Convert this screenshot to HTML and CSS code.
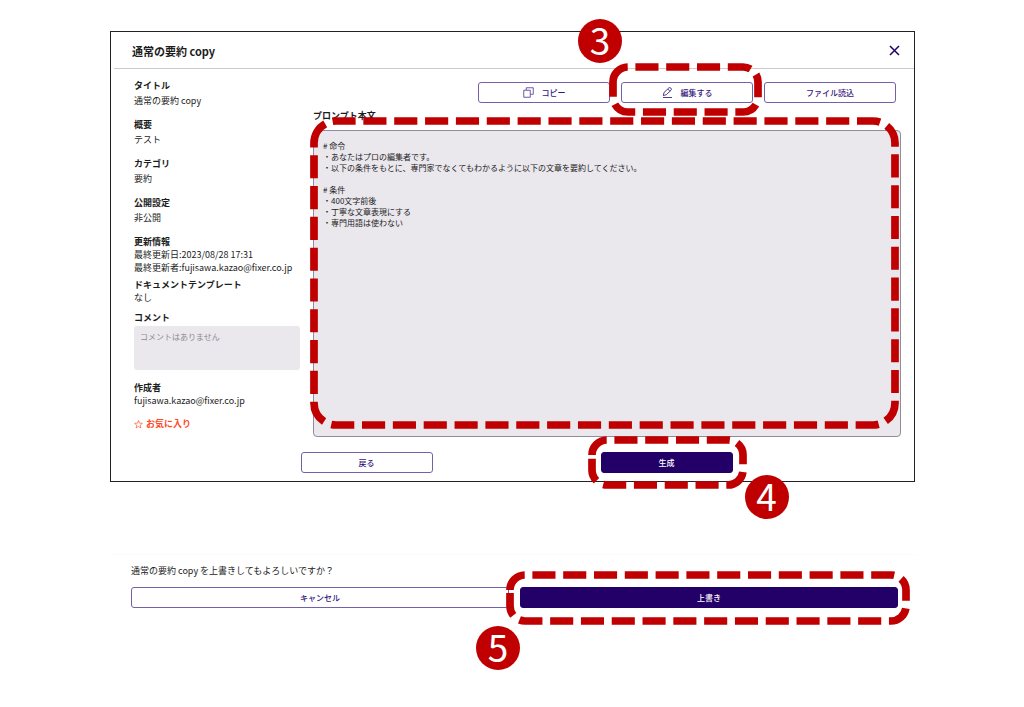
FILE: index.html
```html
<!DOCTYPE html>
<html lang="ja">
<head>
<meta charset="utf-8">
<meta name="viewport" content="width=device-width, initial-scale=1">
<title>通常の要約 copy</title>
<link rel="stylesheet" href="styles.css">
</head>
<body>
<main class="page">
  <section class="panel" aria-labelledby="panel-title">
    <header class="panel-head">
      <h1 class="panel-title" id="panel-title">通常の要約 copy</h1>
      <button class="close" type="button" aria-label="閉じる">
        <svg width="11" height="11" viewBox="0 0 11 11" fill="none" stroke="currentColor" stroke-width="1.5"><path d="M1 1l9 9M10 1L1 10"/></svg>
      </button>
    </header>

    <div class="panel-body">
      <aside class="info">
        <div class="field"><h2>タイトル</h2><p>通常の要約 copy</p></div>
        <div class="field"><h2>概要</h2><p>テスト</p></div>
        <div class="field"><h2>カテゴリ</h2><p>要約</p></div>
        <div class="field"><h2>公開設定</h2><p>非公開</p></div>
        <div class="field tight short"><h2>更新情報</h2><p>最終更新日:2023/08/28 17:31</p><p>最終更新者:fujisawa.kazao@fixer.co.jp</p></div>
        <div class="field tight mid"><h2>ドキュメントテンプレート</h2><p>なし</p></div>
        <div class="field">
          <label for="comment">コメント</label>
          <textarea class="comment" id="comment" placeholder="コメントはありません" readonly></textarea>
        </div>
        <div class="field tight"><h2>作成者</h2><p>fujisawa.kazao@fixer.co.jp</p></div>
        <button class="favorite" type="button">
          <svg width="9" height="9" viewBox="0 0 18 18" fill="none" stroke="currentColor" stroke-width="1.3" stroke-linejoin="round"><path d="M9 1l2.100 5.300 5.700.4-4.400 3.700 1.400 5.600L9 12.900l-4.800 3.100 1.400-5.600L1.200 6.700l5.700-.4z"/></svg>
          お気に入り
        </button>
      </aside>

      <div class="editor">
        <div class="tools">
          <button class="btn" type="button">
            <svg width="11" height="11" viewBox="0 0 22 22" fill="none" stroke="currentColor" stroke-width="1.4"><path d="M1.500 6.500h13v14h-13zM6.500 6V1.500h14v13H15"/></svg>
            コピー
          </button>
          <div class="marked">
            <button class="btn" type="button">
              <svg width="11" height="11" viewBox="0 0 22 22" fill="none" stroke="currentColor" stroke-width="1.7" stroke-linejoin="round"><path d="M2 21h18M2.500 17l1.500-6L13.500 2a3.200 3.200 0 0 1 4.500 4.500L8.500 15.500zM11.500 4l4.500 4.500"/></svg>
              編集する
            </button>
            <svg class="ring ring-edit" viewBox="0 0 145 45" preserveAspectRatio="none" aria-hidden="true"><path d="M0 15A15 15 0 0 1 15 0H130A15 15 0 0 1 145 15V30A15 15 0 0 1 130 45H15A15 15 0 0 1 0 30Z"/></svg>
            <span class="step step-edit">3</span>
          </div>
          <button class="btn" type="button">ファイル読込</button>
        </div>
        <label class="prompt-label" for="prompt">プロンプト本文</label>
        <div class="marked prompt-box">
          <textarea class="prompt" id="prompt" readonly># 命令
・あなたはプロの編集者です。
・以下の条件をもとに、専門家でなくてもわかるように以下の文章を要約してください。

# 条件
・400文字前後
・丁寧な文章表現にする
・専門用語は使わない</textarea>
          <svg class="ring ring-prompt" viewBox="0 0 580 304" preserveAspectRatio="none" aria-hidden="true"><path d="M0 22A22 22 0 0 1 22 0H558A22 22 0 0 1 580 22V282A22 22 0 0 1 558 304H22A22 22 0 0 1 0 282Z"/></svg>
        </div>
      </div>
    </div>

    <footer class="panel-foot">
      <button class="btn" type="button">戻る</button>
      <div class="marked">
        <button class="btn primary" type="button">生成</button>
        <svg class="ring ring-run" viewBox="0 0 151 45" preserveAspectRatio="none" aria-hidden="true"><path d="M0 15A15 15 0 0 1 15 0H136A15 15 0 0 1 151 15V30A15 15 0 0 1 136 45H15A15 15 0 0 1 0 30Z"/></svg>
        <span class="step step-run">4</span>
      </div>
    </footer>
  </section>

  <section class="confirm">
    <p class="question">通常の要約 copy を上書きしてもよろしいですか？</p>
    <div class="choices">
      <button class="btn" type="button">キャンセル</button>
      <div class="marked">
        <button class="btn primary" type="button">上書き</button>
        <svg class="ring ring-save" viewBox="0 0 396 46" preserveAspectRatio="none" aria-hidden="true"><path d="M0 15A15 15 0 0 1 15 0H381A15 15 0 0 1 396 15V31A15 15 0 0 1 381 46H15A15 15 0 0 1 0 31Z"/></svg>
        <span class="step step-save">5</span>
      </div>
    </div>
  </section>
</main>
</body>
</html>
```

FILE: styles.css
```css
* {
  box-sizing: border-box;
  margin: 0;
}

body {
  background: #fff;
  color: #1c1c1c;
  font: 9px/13px "Noto Sans CJK JP", sans-serif;
}

button,
textarea {
  font-family: inherit;
}

.page {
  min-height: 100vh;
  padding: 31px 109px 48px 110px;
}

/* Detail panel */
.panel {
  border: 1px solid #222;
}

.panel-head {
  display: flex;
  align-items: center;
  justify-content: space-between;
  height: 37px;
  margin-left: 3px;
  padding: 1px 14px 0 18px;
  border-bottom: 1px solid #ccc;
}

.panel-title {
  font-size: 11px;
  line-height: 16px;
}

.close {
  display: flex;
  padding: 0;
  border: 0;
  background: none;
  color: #230068;
}

.panel-body {
  display: grid;
  grid-template-columns: 166px 1fr;
  gap: 13px;
  padding: 10px 13px 0 23px;
}

.field {
  display: flex;
  flex-direction: column;
  gap: 2px;
  margin-bottom: 11px;
  white-space: nowrap;
}

.field h2,
.field label,
.prompt-label {
  font-size: 9px;
  font-weight: 700;
}

.tight {
  gap: 0;
}

.short {
  margin-bottom: 4px;
}

.mid {
  margin-bottom: 7px;
}

.comment {
  display: block;
  width: 100%;
  height: 44px;
  padding: 5px 6px;
  border: 0;
  border-radius: 3px;
  background: #eae7ed;
  font-size: 8px;
  line-height: 12px;
  resize: none;
}

.comment::placeholder {
  color: #8e8b91;
  opacity: 1;
}

.favorite {
  display: flex;
  align-items: center;
  gap: 3px;
  padding: 0;
  border: 0;
  background: none;
  color: #ff4a26;
  font-size: 9px;
  font-weight: 700;
  line-height: 12px;
}

.editor {
  display: flex;
  flex-direction: column;
}

.tools {
  display: grid;
  grid-template-columns: repeat(3, 132px);
  justify-content: end;
  gap: 11px;
  margin: 3px 5px 6px 0;
}

.btn {
  display: flex;
  align-items: center;
  justify-content: center;
  gap: 8px;
  width: 100%;
  height: 21px;
  padding: 0;
  border: 1px solid #7560a8;
  border-radius: 3px;
  background: #fff;
  color: #34157a;
  font-size: 8px;
  font-weight: 500;
  line-height: 12px;
}

.primary {
  border-color: #230068;
  background: #230068;
  color: #fff;
}

.prompt-box {
  display: flex;
  flex: 1;
  margin-top: 8px;
}

.prompt {
  width: 100%;
  min-height: 307px;
  padding: 9px;
  border: 1px solid #918b9c;
  border-radius: 4px;
  background: #eae7ed;
  color: #1c1c1c;
  font-size: 8px;
  line-height: 11px;
  resize: none;
}

.panel-foot {
  display: grid;
  grid-template-columns: 132px 132px;
  justify-content: center;
  gap: 168px;
  padding: 15px 0 8px 8px;
}

/* Overwrite confirmation */
.confirm {
  margin-top: 72px;
  padding: 9px 17px 0 21px;
  border-top: 1px solid #fbfbfb;
}

.choices {
  display: grid;
  grid-template-columns: 1fr 1fr;
  gap: 11px;
  margin-top: 10px;
}

/* Step callouts drawn over the screens */
.marked {
  position: relative;
}

.ring {
  position: absolute;
  overflow: visible;
  fill: none;
  stroke: #c00000;
  stroke-width: 7.7;
  stroke-dasharray: 23.1 7.7;
  pointer-events: none;
}

.ring-edit {
  top: -15px;
  left: -8px;
  width: calc(100% + 13px);
  height: 45px;
}

.ring-prompt {
  top: -9px;
  left: 1px;
  width: calc(100% - 7px);
  height: calc(100% - 3px);
}

.ring-run {
  top: -12px;
  left: -9px;
  width: calc(100% + 19px);
  height: 45px;
}

.ring-save {
  top: -12px;
  left: -10px;
  width: calc(100% + 18px);
  height: 46px;
}

.step {
  position: absolute;
  width: 44px;
  height: 44px;
  border-radius: 50%;
  background: #c00000;
  color: #fff;
  font-size: 37px;
  line-height: 41px;
  text-align: center;
}

.step-edit {
  top: -63px;
  left: -43px;
}

.step-run {
  top: 23px;
  right: -56px;
}

.step-save {
  top: 39px;
  left: -44px;
}
```
